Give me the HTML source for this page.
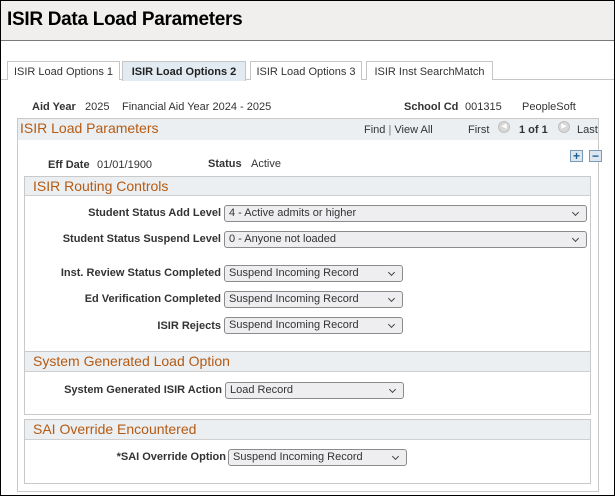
<!DOCTYPE html>
<html><head><style>
*{margin:0;padding:0;box-sizing:border-box}
body{width:615px;height:496px;position:relative;overflow:hidden;font-family:"Liberation Sans",Arial,sans-serif;font-size:11px;color:#333;background:#fff}
.a{position:absolute;white-space:nowrap}
.frame{left:0;top:0;width:615px;height:496px;border:1px solid #000}
.hdr{left:1px;top:1px;width:613px;height:40px;background:#f0efed;border-bottom:1px solid #7a7a7a}
.title{left:7px;top:9px;font-size:19px;font-weight:bold;color:#000;letter-spacing:-0.3px}
.tab{top:61px;height:19px;border:1px solid #c5c5c5;border-bottom:none;background:#fff;font-size:11px;color:#333;padding:4px 0 0 0;text-align:center}
.tab.on{background:#e3ebf2;color:#222;font-weight:bold;border-color:#c5c5c5;height:20px}
.b{font-weight:bold;color:#333}
.box{border:1px solid #c9c9c9;background:#fff}
.bh{background:#ebeff1;border-bottom:1px solid #d0d0d0;color:#b55a13;font-size:14px;padding:1px 0 0 8px;position:absolute;left:0;top:0;right:0}
.sel{height:17px;border:1px solid #8b8b8b;border-radius:3px;background:#eeedf0;font-size:11px;padding:1px 0 0 4px;color:#333}
.sel:after{content:"";position:absolute;right:8px;top:4px;width:4px;height:4px;border-right:1px solid #444;border-bottom:1px solid #444;transform:rotate(45deg)}
.lbl{font-weight:bold;text-align:right;color:#333}
.btn{width:13px;height:12px;border:1px solid #7a9ab5;background:#dbe6ef;color:#1f5d93;font-weight:bold;font-size:12px;line-height:10px;text-align:center}
.circ{width:12px;height:12px;border-radius:50%;background:#d8d8d8;border:1px solid #c0c0c0;font-size:7px;line-height:10px;text-align:center;color:#fff}
</style></head><body>
<div class="a frame"></div>
<div class="a hdr"></div>
<div class="a title">ISIR Data Load Parameters</div>
<div class="a" style="left:1px;top:79px;width:613px;height:1px;background:#c5c5c5"></div>
<div class="a tab" style="left:7px;width:113px">ISIR Load Options 1</div>
<div class="a tab on" style="left:122px;width:124px">ISIR Load Options 2</div>
<div class="a tab" style="left:250px;width:112px">ISIR Load Options 3</div>
<div class="a tab" style="left:366px;width:127px">ISIR Inst SearchMatch</div>

<div class="a b" style="left:32px;top:101px">Aid Year</div>
<div class="a" style="left:85px;top:101px">2025</div>
<div class="a" style="left:122px;top:101px">Financial Aid Year 2024 - 2025</div>
<div class="a b" style="left:404px;top:101px">School Cd</div>
<div class="a" style="left:465px;top:101px">001315</div>
<div class="a" style="left:522px;top:101px">PeopleSoft</div>

<div class="a box" style="left:17px;top:118px;width:582px;height:374px;border-color:#c9c9c9"></div>
<div class="a" style="left:18px;top:119px;width:580px;height:21px;background:#ebeff1"></div>
<div class="a" style="left:20px;top:120px;font-size:14px;color:#b55a13">ISIR Load Parameters</div>
<div class="a" style="left:364px;top:124px">Find <span style="color:#777">|</span> View All</div>
<div class="a" style="left:468px;top:124px">First</div>
<div class="a circ" style="left:498px;top:121px">◀</div>
<div class="a b" style="left:519px;top:124px">1 of 1</div>
<div class="a circ" style="left:558px;top:121px">▶</div>
<div class="a" style="left:577px;top:124px">Last</div>
<div class="a btn" style="left:570px;top:150px">+</div>
<div class="a btn" style="left:589px;top:150px">−</div>

<div class="a b" style="left:48px;top:159px">Eff Date</div>
<div class="a" style="left:97px;top:159px">01/01/1900</div>
<div class="a b" style="left:208px;top:158px">Status</div>
<div class="a" style="left:251px;top:158px">Active</div>

<div class="a box" style="left:24px;top:176px;width:567px;height:198px"><div class="bh" style="height:19px">ISIR Routing Controls</div></div>
<div class="a lbl" style="left:0;width:221px;top:207px">Student Status Add Level</div>
<div class="a sel" style="left:224px;top:205px;width:363px">4 - Active admits or higher</div>
<div class="a lbl" style="left:0;width:221px;top:233px">Student Status Suspend Level</div>
<div class="a sel" style="left:224px;top:231px;width:363px">0 - Anyone not loaded</div>
<div class="a lbl" style="left:0;width:221px;top:267px">Inst. Review Status Completed</div>
<div class="a sel" style="left:224px;top:265px;width:179px">Suspend Incoming Record</div>
<div class="a lbl" style="left:0;width:221px;top:293px">Ed Verification Completed</div>
<div class="a sel" style="left:224px;top:291px;width:179px">Suspend Incoming Record</div>
<div class="a lbl" style="left:0;width:221px;top:320px">ISIR Rejects</div>
<div class="a sel" style="left:224px;top:317px;width:179px">Suspend Incoming Record</div>

<div class="a box" style="left:24px;top:351px;width:567px;height:64px"><div class="bh" style="height:20px">System Generated Load Option</div></div>
<div class="a lbl" style="left:0;width:222px;top:384px">System Generated ISIR Action</div>
<div class="a sel" style="left:225px;top:382px;width:179px">Load Record</div>

<div class="a box" style="left:24px;top:419px;width:567px;height:65px"><div class="bh" style="height:20px">SAI Override Encountered</div></div>
<div class="a lbl" style="left:0;width:226px;top:451px">*SAI Override Option</div>
<div class="a sel" style="left:228px;top:449px;width:179px">Suspend Incoming Record</div>
</body></html>
